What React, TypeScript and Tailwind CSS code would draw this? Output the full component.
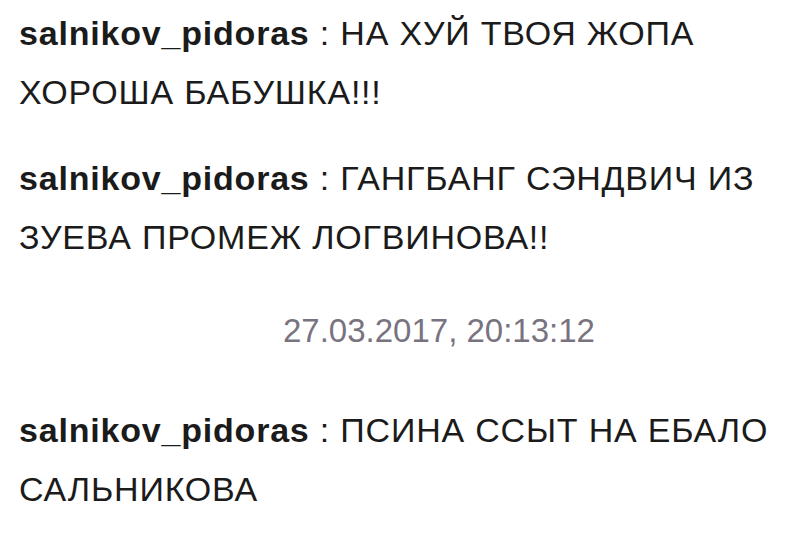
type Message = {
  author: string;
  text: string;
};

type Item = { kind: "msg"; msg: Message } | { kind: "time"; value: string };

const items: Item[] = [
  {
    kind: "msg",
    msg: { author: "salnikov_pidoras", text: "НА ХУЙ ТВОЯ ЖОПА ХОРОША БАБУШКА!!!" },
  },
  {
    kind: "msg",
    msg: {
      author: "salnikov_pidoras",
      text: "ГАНГБАНГ СЭНДВИЧ ИЗ ЗУЕВА ПРОМЕЖ ЛОГВИНОВА!!",
    },
  },
  { kind: "time", value: "27.03.2017, 20:13:12" },
  {
    kind: "msg",
    msg: { author: "salnikov_pidoras", text: "ПСИНА ССЫТ НА ЕБАЛО САЛЬНИКОВА" },
  },
];

export default function App() {
  return (
    <div
      className="min-h-[534px] w-[792px] overflow-hidden bg-white pl-[19px] pt-[4px] text-[#1b1b1b]"
      style={{ fontFamily: '"Liberation Sans", Arial, sans-serif' }}
    >
      <div className="w-[765px]">
        {items.map((it, i) =>
          it.kind === "msg" ? (
            <p
              key={i}
              className="mb-[27px] text-[34px] leading-[59px] tracking-[0.8px]"
            >
              <span className="font-bold">{it.msg.author}</span> : {it.msg.text}
            </p>
          ) : (
            <p
              key={i}
              className="mt-[34px] mb-[41px] pl-[264px] text-[33px] leading-[59px] text-[#78737f]"
            >
              {it.value}
            </p>
          )
        )}
      </div>
    </div>
  );
}
